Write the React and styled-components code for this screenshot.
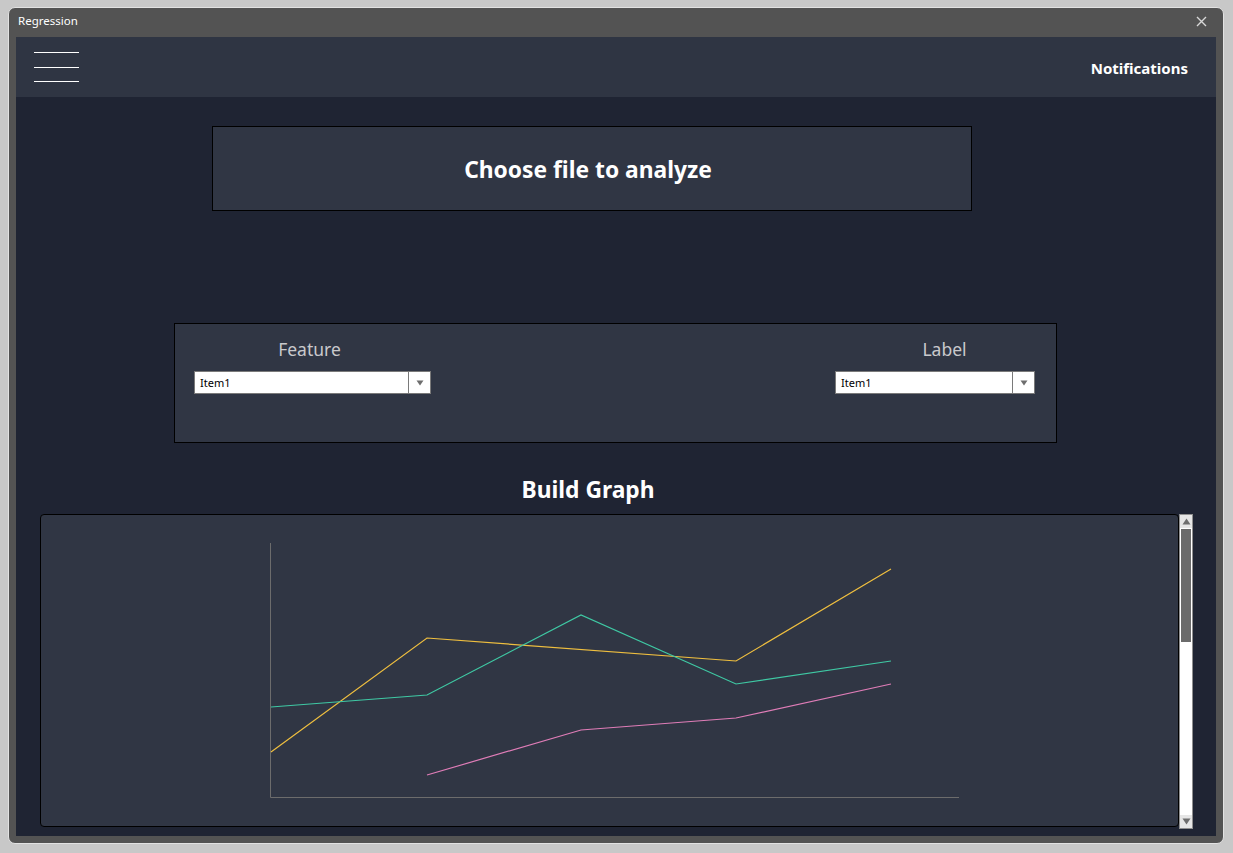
import React from "react";
import styled, { createGlobalStyle } from "styled-components";

const Global = createGlobalStyle`
  html, body { margin: 0; padding: 0; background: #c8c8c8; }
  body { font-family: "Noto Sans", "Open Sans", sans-serif; }
  * { box-sizing: border-box; }
`;

const Page = styled.div`
  width: 1233px;
  height: 853px;
  padding: 7px 9px 9px 8px;
`;

const Window = styled.div`
  width: 1216px;
  height: 837px;
  background: #535353;
  border: 1px solid #e2e2e2;
  border-radius: 7px;
  display: flex;
  flex-direction: column;
  padding: 0 7px 7px 7px;
  overflow: hidden;
`;

const TitleBar = styled.div`
  height: 29px;
  display: flex;
  align-items: center;
  justify-content: space-between;
  padding: 0 8px 0 2px;
`;

const TitleText = styled.span`
  color: #ffffff;
  font-size: 11.5px;
  margin-top: -4px;
`;

const CloseIcon = styled.svg`
  width: 11px;
  height: 11px;
  margin-top: -3px;
  margin-right: 1px;
`;

const Content = styled.div`
  flex: 1;
  background: #1f2433;
  display: flex;
  flex-direction: column;
  align-items: flex-start;
`;

const TopBar = styled.div`
  width: 100%;
  height: 60px;
  background: #2f3543;
  display: flex;
  align-items: center;
  justify-content: space-between;
  padding: 0 28px 0 18px;
`;

const Hamburger = styled.div`
  display: flex;
  flex-direction: column;
  gap: 13.5px;
`;

const HamLine = styled.div`
  width: 45px;
  height: 1px;
  background: #ffffff;
`;

const NavLink = styled.span`
  color: #ffffff;
  font-weight: 700;
  font-size: 15px;
  margin-top: 1px;
`;

const ChooseBox = styled.div`
  margin-top: 29px;
  margin-left: 196px;
  width: 760px;
  height: 85px;
  background: #303644;
  border: 1px solid #000;
  display: flex;
  align-items: center;
  justify-content: center;
  padding: 2px 8px 0 0;
  color: #fff;
  font-weight: 700;
  font-size: 22.8px;
`;

const SelectPanel = styled.div`
  margin-top: 112px;
  margin-left: 158px;
  width: 883px;
  height: 120px;
  background: #303644;
  border: 1px solid #000;
  display: flex;
  justify-content: space-between;
  align-items: flex-start;
  padding: 12px 21px 0 19px;
`;

const Field = styled.div`
  display: flex;
  flex-direction: column;
  align-items: center;
  gap: 9px;
  width: ${(p) => p.$w}px;
`;

const FieldLabel = styled.span`
  color: #c9c9cc;
  font-size: 17.5px;
  line-height: 26px;
  margin-left: ${(p) => p.$shift || 0}px;
`;

const Combo = styled.div`
  width: 100%;
  height: 23px;
  background: #fff;
  border: 1px solid #7a7a7a;
  display: flex;
  align-items: stretch;
`;

const ComboText = styled.span`
  flex: 1;
  font-size: 11px;
  color: #000;
  display: flex;
  align-items: center;
  padding-left: 5px;
`;

const ComboButton = styled.span`
  width: 22px;
  border-left: 1px solid #7a7a7a;
  display: flex;
  align-items: center;
  justify-content: center;
`;

const SectionTitle = styled.div`
  margin-top: 32px;
  width: 1144px;
  text-align: center;
  color: #fff;
  font-weight: 700;
  font-size: 22.8px;
  line-height: 30px;
`;

const ChartRow = styled.div`
  margin: 9px 0 6px 24px;
  width: 1153px;
  height: 314px;
  display: flex;
  align-items: flex-start;
`;

const ChartPanel = styled.div`
  width: 1139px;
  height: 313px;
  background: #303644;
  border: 1px solid #000;
  border-radius: 4px;
`;

const ChartSvg = styled.svg`
  display: block;
  width: 100%;
  height: 100%;
`;

const ScrollBar = styled.div`
  width: 14px;
  height: 315px;
  background: #fff;
  border: 1px solid #8f8f8f;
  display: flex;
  flex-direction: column;
`;

const ScrollBtn = styled.div`
  height: 13px;
  background: #e6e6e6;
  display: flex;
  align-items: center;
  justify-content: center;
`;

const Thumb = styled.div`
  height: 113px;
  margin: 1px 1px 0 1px;
  background: #6b6b6b;
`;

const Track = styled.div`
  flex: 1;
`;

const Arrow = ({ dir }) => (
  <svg width="9" height="7" viewBox="0 0 9 7">
    {dir === "up" ? (
      <polygon points="4.5,0.5 8.5,6.5 0.5,6.5" fill="#6e6e6e" />
    ) : (
      <polygon points="0.5,0.5 8.5,0.5 4.5,6.5" fill="#6e6e6e" />
    )}
  </svg>
);

const ComboArrow = () => (
  <svg width="8" height="6" viewBox="0 0 8 6">
    <polygon points="0.5,0.5 7.5,0.5 4,5.5" fill="#6e6e6e" />
  </svg>
);

const Select = ({ w, label, shift }) => (
  <Field $w={w}>
    <FieldLabel $shift={shift}>{label}</FieldLabel>
    <Combo>
      <ComboText>Item1</ComboText>
      <ComboButton>
        <ComboArrow />
      </ComboButton>
    </Combo>
  </Field>
);

const series = [
  { color: "#efbf3f", pts: [[230, 237], [386, 123], [695, 146], [850, 54]] },
  { color: "#3fc9a4", pts: [[230, 192], [386, 180], [540, 100], [695, 169], [850, 146]] },
  { color: "#e07db8", pts: [[386, 260], [540, 215], [695, 203], [850, 169]] },
];

export default function App() {
  return (
    <>
      <Global />
      <Page>
        <Window>
          <TitleBar>
            <TitleText>Regression</TitleText>
            <CloseIcon viewBox="0 0 11 11">
              <path d="M1 1 L10 10 M10 1 L1 10" stroke="#d8d8d8" strokeWidth="1.4" />
            </CloseIcon>
          </TitleBar>
          <Content>
            <TopBar>
              <Hamburger>
                <HamLine />
                <HamLine />
                <HamLine />
              </Hamburger>
              <NavLink>Notifications</NavLink>
            </TopBar>
            <ChooseBox>Choose file to analyze</ChooseBox>
            <SelectPanel>
              <Select w={237} label="Feature" shift={-6} />
              <Select w={200} label="Label" shift={19} />
            </SelectPanel>
            <SectionTitle>Build Graph</SectionTitle>
            <ChartRow>
              <ChartPanel>
                <ChartSvg viewBox="0 0 1137 311">
                  <path d="M229.5 28 V282.5 H918" fill="none" stroke="#6c6c6c" strokeWidth="1" />
                  {series.map((s, i) => (
                    <polyline
                      key={i}
                      points={s.pts.map((p) => p.join(",")).join(" ")}
                      fill="none"
                      stroke={s.color}
                      strokeWidth="1.2"
                    />
                  ))}
                </ChartSvg>
              </ChartPanel>
              <ScrollBar>
                <ScrollBtn>
                  <Arrow dir="up" />
                </ScrollBtn>
                <Thumb />
                <Track />
                <ScrollBtn>
                  <Arrow dir="down" />
                </ScrollBtn>
              </ScrollBar>
            </ChartRow>
          </Content>
        </Window>
      </Page>
    </>
  );
}
